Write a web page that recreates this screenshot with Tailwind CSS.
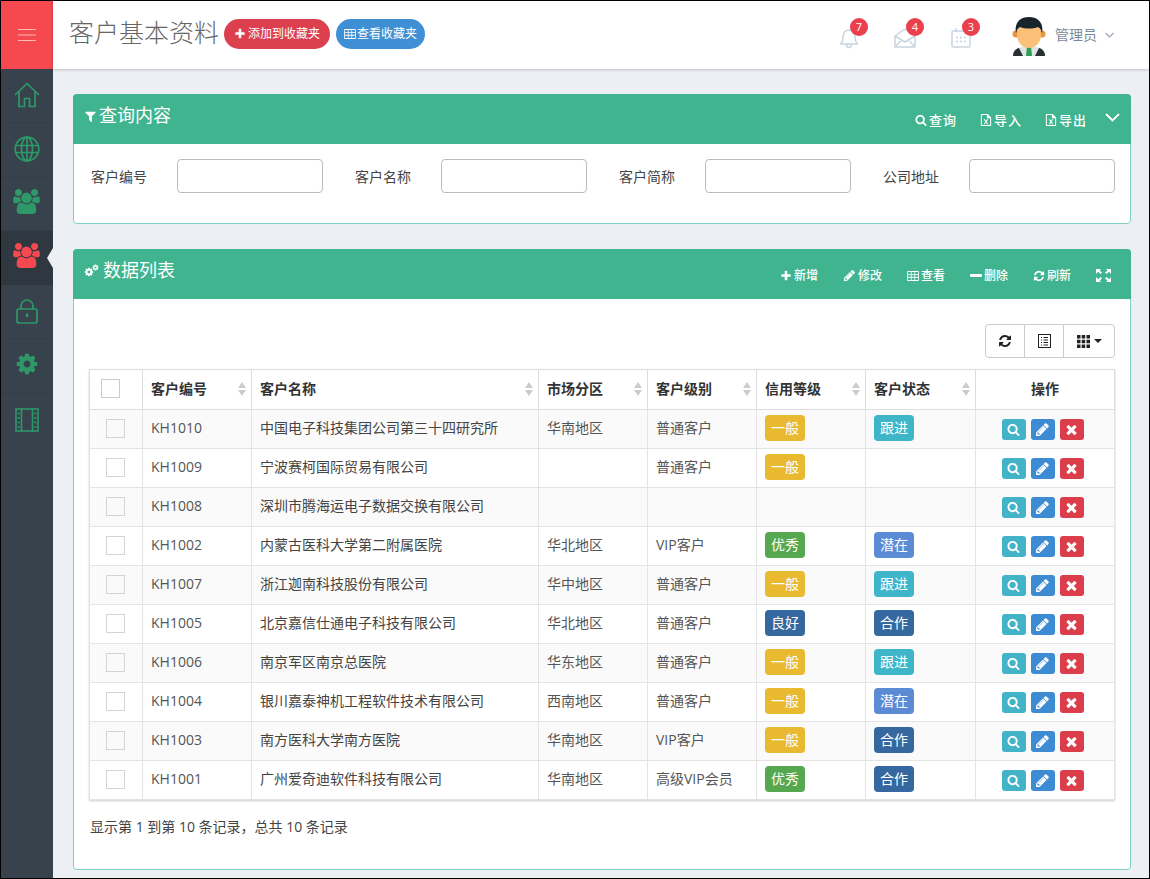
<!DOCTYPE html>
<html lang="en">
<head>
    <meta charset="UTF-8">
    <title>客户基本资料</title>
    <script src="https://cdn.jsdelivr.net/npm/@tailwindcss/browser@4"></script>
</head>
<body class="relative w-[1150px] h-[879px] overflow-hidden bg-[#ecf0f5] font-['Open_Sans','Noto_Sans_CJK_SC',sans-serif] text-sm text-[#555]">
    <!-- Icon sprites -->
    <svg class="hidden">
        <symbol id="i-search" viewBox="0 0 1792 1792"><path d="M1216 832q0-185-131.5-316.5t-316.5-131.5-316.5 131.5-131.5 316.5 131.5 316.5 316.5 131.5 316.5-131.5 131.5-316.5zm512 832q0 52-38 90t-90 38q-54 0-90-38l-343-342q-179 124-399 124-143 0-273.5-55.5t-225-150-150-225-55.5-273.5 55.5-273.5 150-225 225-150 273.5-55.5 273.5 55.5 225 150 150 225 55.5 273.5q0 220-124 399l343 343q37 37 37 90z"/></symbol>
        <symbol id="i-times" viewBox="0 0 1792 1792"><path d="M1490 1322q0 40-28 68l-136 136q-28 28-68 28t-68-28l-294-294-294 294q-28 28-68 28t-68-28l-136-136q-28-28-28-68t28-68l294-294-294-294q-28-28-28-68t28-68l136-136q28-28 68-28t68 28l294 294 294-294q28-28 68-28t68 28l136 136q28 28 28 68t-28 68l-294 294 294 294q28 28 28 68z"/></symbol>
        <symbol id="i-plus" viewBox="0 0 1792 1792"><path d="M1600 736v192q0 40-28 68t-68 28h-416v416q0 40-28 68t-68 28h-192q-40 0-68-28t-28-68v-416h-416q-40 0-68-28t-28-68v-192q0-40 28-68t68-28h416v-416q0-40 28-68t68-28h192q40 0 68 28t28 68v416h416q40 0 68 28t28 68z"/></symbol>
        <symbol id="i-pencil" viewBox="0 0 1792 1792"><path d="M491 1536l91-91-235-235-91 91v107h128v128h107zm523-928q0-22-22-22-10 0-17 7l-542 542q-7 7-7 17 0 22 22 22 10 0 17-7l542-542q7-7 7-17zm-54-192l416 416-832 832h-416v-416zm683 96q0 53-37 90l-166 166-416-416 166-165q36-38 90-38 53 0 91 38l235 234q37 39 37 91z"/></symbol>
        <symbol id="i-filter" viewBox="0 0 1792 1792"><path d="M1595 295q17 41-14 70l-493 493v742q0 42-39 59-13 5-25 5-27 0-45-19l-256-256q-19-19-19-45v-486l-493-493q-31-29-14-70 17-39 59-39h1280q42 0 59 39z"/></symbol>
        <symbol id="i-refresh" viewBox="0 0 1792 1792"><path d="M1639 1056q0 5-1 7-64 268-268 434.5t-478 166.5q-146 0-282.5-55t-243.5-157l-129 129q-19 19-45 19t-45-19-19-45v-448q0-26 19-45t45-19h448q26 0 45 19t19 45-19 45l-137 137q71 66 161 102t187 36q134 0 250-65t186-179q11-17 53-117 8-23 30-23h192q13 0 22.5 9.5t9.5 22.5zm25-800v448q0 26-19 45t-45 19h-448q-26 0-45-19t-19-45 19-45l138-138q-148-137-349-137-134 0-250 65t-186 179q-11 17-53 117-8 23-30 23h-199q-13 0-22.5-9.5t-9.5-22.5v-7q65-268 270-434.5t480-166.5q146 0 284 55.5t245 156.5l130-129q19-19 45-19t45 19 19 45z"/></symbol>
        <symbol id="i-users" viewBox="0 0 1920 1792"><path d="M593 896q-162 5-265 128h-134q-82 0-138-40.5t-56-118.5q0-353 124-353 6 0 43.5 21t97.5 42.5 119 21.5q67 0 133-23-5 37-5 66 0 139 81 256zm1071 637q0 120-73 189.5t-194 69.5h-874q-121 0-194-69.5t-73-189.5q0-53 3.5-103.5t14-109 26.5-108.5 43-97.5 62-81 85.5-53.5 111.5-20q10 0 43 21.5t73 48 107 48 135 21.5 135-21.5 107-48 73-48 43-21.5q61 0 111.5 20t85.5 53.5 62 81 43 97.5 26.5 108.5 14 109 3.5 103.5zm-1024-1277q0 106-75 181t-181 75-181-75-75-181 75-181 181-75 181 75 75 181zm704 384q0 159-112.5 271.5t-271.5 112.5-271.5-112.5-112.5-271.5 112.5-271.5 271.5-112.5 271.5 112.5 112.5 271.5zm576 225q0 78-56 118.5t-138 40.5h-134q-103-123-265-128 81-117 81-256 0-29-5-66 66 23 133 23 59 0 119-21.5t97.5-42.5 43.5-21q124 0 124 353zm-128-609q0 106-75 181t-181 75-181-75-75-181 75-181 181-75 181 75 75 181z"/></symbol>
        <symbol id="i-cog" viewBox="0 0 1792 1792"><path d="M1152 896q0-106-75-181t-181-75-181 75-75 181 75 181 181 75 181-75 75-181zm512-109v222q0 12-8 23t-20 13l-185 28q-19 54-39 91 35 50 107 138 10 12 10 25t-9 23q-27 37-99 108t-94 71q-12 0-26-9l-138-108q-44 23-91 38-16 136-29 186-7 28-36 28h-222q-14 0-24.5-8.5t-11.5-21.5l-28-184q-49-16-90-37l-141 107q-10 9-25 9-14 0-25-11-126-114-165-168-7-10-7-23 0-12 8-23 15-21 51-66.5t54-70.5q-27-50-41-99l-183-27q-13-2-21-12.5t-8-23.5v-222q0-12 8-23t19-13l186-28q14-46 39-92-40-57-107-138-10-12-10-24 0-10 9-23 26-36 98.5-107.5t94.5-71.5q13 0 26 10l138 107q44-23 91-38 16-136 29-186 7-28 36-28h222q14 0 24.5 8.5t11.5 21.5l28 184q49 16 90 37l142-107q9-9 24-9 13 0 25 10 129 119 165 170 7 8 7 22 0 12-8 23-15 21-51 66.5t-54 70.5q26 50 41 98l183 28q13 2 21 12.5t8 23.5z"/></symbol>
        <symbol id="i-table" viewBox="0 0 14 12"><path fill-rule="evenodd" d="M1 0h12a1 1 0 0 1 1 1v10a1 1 0 0 1-1 1H1a1 1 0 0 1-1-1V1a1 1 0 0 1 1-1zm0 1.2v2.4h3.4V1.2zm4.3 0v2.4h3.4V1.2zm4.3 0v2.4H13V1.2zM1 4.6V7h3.4V4.6zm4.3 0V7h3.4V4.6zm4.3 0V7H13V4.6zM1 8v2.8h3.4V8zm4.3 0v2.8h3.4V8zm4.3 0v2.8H13V8z"/></symbol>
        <symbol id="i-excel" viewBox="0 0 12 14"><path fill-rule="evenodd" d="M1 0h7l4 4v9a1 1 0 0 1-1 1H1a1 1 0 0 1-1-1V1a1 1 0 0 1 1-1zm.2 1.2v11.6h9.6V5H7V1.2zM3.3 6h1.4L6 8l1.3-2h1.4L6.8 9l1.9 3H7.3L6 10l-1.3 2H3.3l1.9-3z"/></symbol>
    </svg>

    <!-- Sidebar -->
    <aside class="absolute left-0 top-0 bottom-0 w-[53px] bg-[#37424c]">
        <div class="h-[69px] bg-[#f5484f] flex items-center justify-center">
            <svg class="w-[18px] h-[14px]" viewBox="0 0 18 14" fill="none" stroke="#fbb" stroke-width="1"><path d="M0 1.5h18M0 7h18M0 12.5h18"/></svg>
        </div>
        <div class="h-[54px] flex items-center justify-center border-b border-[#333e47] text-[#2e9868]">
            <svg class="w-[26px] h-[26px] -mt-[1px]" viewBox="0 0 26 26" fill="none" stroke="currentColor" stroke-width="1.7" stroke-linejoin="round"><path d="M1 13 13 1.5 25 13M5 10v14.5h5.5v-8h5v8H21V10"/></svg>
        </div>
        <div class="h-[54px] flex items-center justify-center border-b border-[#333e47] text-[#2e9868]">
            <svg class="w-[26px] h-[26px] -mt-[2px]" viewBox="0 0 26 26" fill="none" stroke="currentColor" stroke-width="1.7"><circle cx="13" cy="13" r="11.8"/><ellipse cx="13" cy="13" rx="5.5" ry="11.8"/><path d="M13 1v24M1.5 9.500h23M1.500 16.500h23"/></svg>
        </div>
        <div class="h-[54px] flex items-center justify-center border-b border-[#333e47] text-[#2e9868]">
            <svg class="w-[27px] h-[25px] -mt-[4px] -ml-px fill-current"><use href="#i-users"/></svg>
        </div>
        <div class="relative h-[54px] flex items-center justify-center bg-[#2f3841] text-[#f5484f]">
            <svg class="w-[27px] h-[25px] -mt-[6px] -ml-px fill-current"><use href="#i-users"/></svg>
            <span class="absolute right-0 top-[17px] border-y-[10px] border-r-[6px] border-y-transparent border-r-[#ecf0f5]"></span>
        </div>
        <div class="h-[54px] flex items-center justify-center border-b border-[#333e47] text-[#2e9868]">
            <svg class="w-[22px] h-[25px] -mt-[1px]" viewBox="0 0 22 25" fill="none" stroke="currentColor" stroke-width="1.7"><rect x="1" y="10" width="20" height="14" rx="2"/><path d="M5 10V7a6 6 0 0 1 12 0v3"/><path d="M11 14.500v3.500" stroke-width="2.6"/></svg>
        </div>
        <div class="h-[54px] flex items-center justify-center border-b border-[#333e47] text-[#2e9868]">
            <svg class="w-6 h-6 -mt-[4px] fill-current"><use href="#i-cog"/></svg>
        </div>
        <div class="h-[54px] flex items-center justify-center text-[#2e9868]">
            <svg class="w-6 h-[24px]" viewBox="0 0 24 24" fill="none" stroke="currentColor" stroke-width="1.6"><rect x="1" y="1" width="22" height="22"/><path d="M6.500 1v22M17.500 1v22"/><path d="M2.500 5.500h2.500M2.500 10h2.500M2.500 14.500h2.500M2.500 19h2.500M19 5.500h2.500M19 10h2.500M19 14.500h2.500M19 19h2.500" stroke-width="1.5"/></svg>
        </div>
    </aside>

    <!-- Top bar -->
    <header class="absolute left-[53px] right-0 top-0 h-[69px] bg-white shadow-[0_1px_3px_rgba(0,0,0,0.2)] flex items-center pl-4">
        <h1 class="text-[25px] font-light text-[#666] leading-none -mt-[4px]">客户基本资料</h1>
        <button class="ml-[5px] -mt-[1px] h-[30px] w-[106px] rounded-full bg-[#dc3f4e] text-white text-xs flex items-center justify-center gap-[2px]">
            <svg class="w-[12px] h-[12px] fill-current"><use href="#i-plus"/></svg>添加到收藏夹
        </button>
        <button class="ml-[6px] -mt-[1px] h-[30px] w-[89px] rounded-full bg-[#3f8fd5] text-white text-xs flex items-center justify-center gap-[1px]">
            <svg class="w-[12px] h-[10px] fill-current"><use href="#i-table"/></svg>查看收藏夹
        </button>

        <div class="ml-auto flex items-center">
            <div class="relative w-[56px] h-[30px] flex items-center justify-center">
                <svg class="w-[20px] h-[22px] mt-[6px]" viewBox="0 0 20 22" fill="none" stroke="#c9d4e0" stroke-width="1.5" stroke-linejoin="round"><path d="M1.5 17c2-2 2.5-3 2.5-7 0-4 2.5-7 6-7s6 3 6 7c0 4 .5 5 2.500 7zM7.500 17.500c0 4 5 4 5 0"/></svg>
                <span class="absolute left-[29px] -top-[2px] w-[18px] h-[18px] rounded-full bg-[#ec3f4d] text-white text-[11px] leading-[18px] text-center">7</span>
            </div>
            <div class="relative w-[56px] h-[30px] flex items-center justify-center">
                <svg class="w-[22px] h-[20px] mt-[6px]" viewBox="0 0 22 20" fill="none" stroke="#c9d4e0" stroke-width="1.5" stroke-linejoin="round"><path d="M1 8 11 1l10 7v11H1zM1 8l10 6 10-6M1 19l7-7.500M21 19l-7-7.500"/></svg>
                <span class="absolute left-[29px] -top-[2px] w-[18px] h-[18px] rounded-full bg-[#ec3f4d] text-white text-[11px] leading-[18px] text-center">4</span>
            </div>
            <div class="relative w-[56px] h-[30px] flex items-center justify-center">
                <svg class="w-[20px] h-[20px] mt-[6px]" viewBox="0 0 20 20" fill="none" stroke="#c9d4e0" stroke-width="1.5"><rect x="1" y="3" width="18" height="16" rx="1"/><path d="M5 0v4M15 0v4M5 9.500h2M9 9.500h2M13 9.500h2M5 13.500h2M9 13.500h2M13 13.500h2"/></svg>
                <span class="absolute left-[29px] -top-[2px] w-[18px] h-[18px] rounded-full bg-[#ec3f4d] text-white text-[11px] leading-[18px] text-center">3</span>
            </div>
            <svg class="ml-[21px] w-[38px] h-[39px] mt-[3px]" viewBox="0 0 38 39">
                <path d="M3 39c0-6 5-10 16-10s16 4 16 10z" fill="#dfe5e6"/>
                <path d="M3 39c0-4 2-7 6-8l4 8zM35 39c0-4-2-7-6-8l-4 8z" fill="#2a3032"/>
                <path d="M17 29h4l1 10h-6z" fill="#2f9e55"/>
                <circle cx="6" cy="17" r="3.500" fill="#e8953f"/><circle cx="32" cy="17" r="3.500" fill="#e8953f"/>
                <ellipse cx="19" cy="18" rx="12" ry="13" fill="#fbc078"/>
                <path d="M6 16C4 6 10 0 19 0s15 6 13 16c-1-3-2-5-4-6-5 2-13 2-18 0-2 1-3 3-4 6z" fill="#17242c"/>
            </svg>
            <span class="ml-[7px] text-sm text-[#7b8a99]">管理员</span>
            <svg class="ml-2 mr-9 w-[9px] h-[6px]" viewBox="0 0 9 6" fill="none" stroke="#9aa6b2" stroke-width="1.2"><path d="M.5 1 4.500 5l4-4"/></svg>
        </div>
    </header>

    <main class="absolute left-[73px] top-[94px] w-[1058px]">
        <!-- Query panel -->
        <section class="h-[130px] bg-white border border-[#7fd0c4] rounded">
            <div class="-mx-px -mt-px h-[50px] bg-[#40b48f] rounded-t text-white flex items-center pl-[11px] pr-[11px]">
                <svg class="w-[13px] h-[13px] -mt-[6px] fill-current"><use href="#i-filter"/></svg>
                <h2 class="ml-[2px] text-lg -mt-[8px]">查询内容</h2>
                <div class="ml-auto flex items-center text-[13px] font-medium mt-[2px]">
                    <span class="flex items-center gap-[2px] tracking-[1px] mr-[23px]"><svg class="w-3 h-3 fill-current"><use href="#i-search"/></svg>查询</span>
                    <span class="flex items-center gap-[2px] tracking-[1px] mr-[23px]"><svg class="w-3 h-3 fill-current"><use href="#i-excel"/></svg>导入</span>
                    <span class="flex items-center gap-[2px] tracking-[1px] mr-[18px]"><svg class="w-3 h-3 fill-current"><use href="#i-excel"/></svg>导出</span>
                    <svg class="w-[15px] h-[9px] -mt-[6px]" viewBox="0 0 15 9" fill="none" stroke="currentColor" stroke-width="1.8"><path d="m1 1 6.500 6.500L14 1"/></svg>
                </div>
            </div>
            <form class="flex pl-[17px] pt-[15px] gap-[32px] text-[#444]">
                <label class="flex items-center">
                    <span class="w-[86px] pt-[2px]">客户编号</span>
                    <input class="w-[146px] h-[34px] border border-[#bbb] rounded bg-white">
                </label>
                <label class="flex items-center">
                    <span class="w-[86px] pt-[2px]">客户名称</span>
                    <input class="w-[146px] h-[34px] border border-[#bbb] rounded bg-white">
                </label>
                <label class="flex items-center">
                    <span class="w-[86px] pt-[2px]">客户简称</span>
                    <input class="w-[146px] h-[34px] border border-[#bbb] rounded bg-white">
                </label>
                <label class="flex items-center">
                    <span class="w-[86px] pt-[2px]">公司地址</span>
                    <input class="w-[146px] h-[34px] border border-[#bbb] rounded bg-white">
                </label>
            </form>
        </section>

        <!-- Data list panel -->
        <section class="mt-[25px] h-[621px] bg-white border border-[#7fd0c4] rounded">
            <div class="-mx-px -mt-px h-[50px] bg-[#40b48f] rounded-t text-white flex items-center pl-[11px] pr-[20px]">
                <span class="relative w-[15px] h-[12px] -mt-[6px]">
                    <svg class="absolute left-0 top-[2px] w-[10px] h-[10px] fill-current"><use href="#i-cog"/></svg>
                    <svg class="absolute right-0 -top-[1px] w-[7px] h-[7px] fill-current"><use href="#i-cog"/></svg>
                </span>
                <h2 class="ml-[4px] text-lg -mt-[8px]">数据列表</h2>
                <div class="ml-auto flex items-center gap-[25px] text-xs font-medium mt-[3px]">
                    <span class="flex items-center gap-[2px]"><svg class="w-3 h-3 fill-current"><use href="#i-plus"/></svg>新增</span>
                    <span class="flex items-center gap-[2px]"><svg class="w-[13px] h-[13px] fill-current"><use href="#i-pencil"/></svg>修改</span>
                    <span class="flex items-center gap-[2px]"><svg class="w-3 h-[10px] fill-current"><use href="#i-table"/></svg>查看</span>
                    <span class="flex items-center gap-[2px]"><span class="w-3 h-[3px] bg-white rounded-[1px]"></span>删除</span>
                    <span class="flex items-center gap-[2px]"><svg class="w-3 h-3 fill-current"><use href="#i-refresh"/></svg>刷新</span>
                    <svg class="w-[15px] h-[13px]" viewBox="0 0 15 13" fill="currentColor"><path d="M0 0h5L3.600 1.400 6 3.600 4.600 5 2.200 2.800 0 5zM15 0v5l-2-2.200L10.400 5 9 3.600l2.600-2.200L10 0zM0 13V8l2.200 2.200L4.600 8 6 9.400l-2.400 2.200L5 13zM15 13h-5l1.600-1.400L9 9.400 10.400 8l2.600 2.200L15 8z"/></svg>
                </div>
            </div>

            <div class="px-[15px]">
                <!-- Table toolbar -->
                <div class="flex justify-end pt-[25px] pb-[11px]">
                    <div class="flex h-[34px] border border-[#ccc] rounded text-[#222] bg-white">
                        <button class="w-[39px] flex items-center justify-center border-r border-[#ccc]"><svg class="w-[14px] h-[14px] fill-current"><use href="#i-refresh"/></svg></button>
                        <button class="w-[39px] flex items-center justify-center border-r border-[#ccc]">
                            <svg class="w-[13px] h-[14px]" viewBox="0 0 13 14" fill="none" stroke="currentColor"><rect x=".5" y=".5" width="12" height="13"/><path d="M3 3.500h1M5.500 3.500H10M3 6h1M5.500 6H10M3 8.500h1M5.500 8.500H10M3 11h1M5.500 11H10"/></svg>
                        </button>
                        <button class="w-[50px] flex items-center justify-center gap-[4px]">
                            <svg class="w-[13px] h-[13px]" viewBox="0 0 13 13" fill="currentColor"><path d="M0 0h3.500v3.500H0zM4.700 0h3.500v3.500H4.700zM9.500 0H13v3.500H9.500zM0 4.700h3.500v3.500H0zM4.700 4.700h3.500v3.500H4.700zM9.500 4.700H13v3.500H9.500zM0 9.500h3.500V13H0zM4.700 9.500h3.500V13H4.700zM9.500 9.500H13V13H9.500z"/></svg>
                            <span class="border-x-[4px] border-t-[4px] border-x-transparent border-t-[#222]"></span>
                        </button>
                    </div>
                </div>

                <table class="w-[1025px] table-fixed border-collapse border border-[#ddd] shadow-[0_1px_2px_rgba(0,0,0,0.2)]">
                    <colgroup>
                        <col class="w-[53px]"><col class="w-[109px]"><col class="w-[287px]"><col class="w-[109px]"><col class="w-[109px]"><col class="w-[109px]"><col class="w-[110px]"><col class="w-[139px]">
                    </colgroup>
                    <thead>
                        <tr class="h-[40px] text-[#333] font-bold">
                            <th class="border border-[#ddd] pb-[2px]"><span class="block ml-[11px] w-[19px] h-[19px] border border-[#ccc]"></span></th>
                            <th class="border border-[#ddd] text-left pl-2 pb-[2px]"><span class="flex items-center justify-between pr-[5px]">客户编号<span></span></span></th>
                            <th class="border border-[#ddd] text-left pl-2 pb-[2px]"><span class="flex items-center justify-between pr-[5px]">客户名称<span></span></span></th>
                            <th class="border border-[#ddd] text-left pl-2 pb-[2px]"><span class="flex items-center justify-between pr-[5px]">市场分区<span></span></span></th>
                            <th class="border border-[#ddd] text-left pl-2 pb-[2px]"><span class="flex items-center justify-between pr-[5px]">客户级别<span></span></span></th>
                            <th class="border border-[#ddd] text-left pl-2 pb-[2px]"><span class="flex items-center justify-between pr-[5px]">信用等级<span></span></span></th>
                            <th class="border border-[#ddd] text-left pl-2 pb-[2px]"><span class="flex items-center justify-between pr-[5px]">客户状态<span></span></span></th>
                            <th class="border border-[#ddd] pb-[2px]">操作</th>
                        </tr>
                    </thead>
                    <tbody id="rows"></tbody>
                </table>

                <p class="mt-[17px] pl-px text-[#444]">显示第 1 到第 10 条记录，总共 10 条记录</p>
            </div>
        </section>
    </main>

    <!-- Screenshot frame -->
    <div class="pointer-events-none absolute inset-0 border border-black"></div>

    <script>
        const credit = {
            '一般': 'bg-[#e9b92f]',
            '优秀': 'bg-[#55a84f]',
            '良好': 'bg-[#35689f]'
        };
        const state = {
            '跟进': 'bg-[#3fb5c9]',
            '潜在': 'bg-[#5b8bd5]',
            '合作': 'bg-[#35689f]'
        };
        const customers = [
            ['KH1010', '中国电子科技集团公司第三十四研究所', '华南地区', '普通客户', '一般', '跟进'],
            ['KH1009', '宁波赛柯国际贸易有限公司', '', '普通客户', '一般', ''],
            ['KH1008', '深圳市腾海运电子数据交换有限公司', '', '', '', ''],
            ['KH1002', '内蒙古医科大学第二附属医院', '华北地区', 'VIP客户', '优秀', '潜在'],
            ['KH1007', '浙江迦南科技股份有限公司', '华中地区', '普通客户', '一般', '跟进'],
            ['KH1005', '北京嘉信仕通电子科技有限公司', '华北地区', '普通客户', '良好', '合作'],
            ['KH1006', '南京军区南京总医院', '华东地区', '普通客户', '一般', '跟进'],
            ['KH1004', '银川嘉泰神机工程软件技术有限公司', '西南地区', '普通客户', '一般', '潜在'],
            ['KH1003', '南方医科大学南方医院', '华南地区', 'VIP客户', '一般', '合作'],
            ['KH1001', '广州爱奇迪软件科技有限公司', '华南地区', '高级VIP会员', '优秀', '合作']
        ];

        function badge(text, colors) {
            if (!text) return '';
            return `<span class="inline-block w-10 h-[26px] leading-[25px] rounded text-center text-white ${colors[text]}">${text}</span>`;
        }

        function actionButton(icon, color, size) {
            return `<button class="w-6 h-[21px] rounded-[3px] text-white flex items-center justify-center ${color}"><svg class="${size} fill-current"><use href="#${icon}"/></svg></button>`;
        }

        document.getElementById('rows').innerHTML = customers.map((c, i) => `
            <tr class="h-[39px] ${i % 2 === 0 ? 'bg-[#fafafa]' : 'bg-white'}">
                <td class="border border-[#e4e4e4] pb-[2px]"><span class="block ml-4 w-[19px] h-[19px] border border-[#d4d4d4]"></span></td>
                <td class="border border-[#e4e4e4] pl-2 pb-[2px] text-[#555]">${c[0]}</td>
                <td class="border border-[#e4e4e4] pl-2 pb-[2px] text-[#444]">${c[1]}</td>
                <td class="border border-[#e4e4e4] pl-2 pb-[2px]">${c[2]}</td>
                <td class="border border-[#e4e4e4] pl-2 pb-[2px]">${c[3]}</td>
                <td class="border border-[#e4e4e4] pl-2 pb-[2px]">${badge(c[4], credit)}</td>
                <td class="border border-[#e4e4e4] pl-2 pb-[2px]">${badge(c[5], state)}</td>
                <td class="border border-[#e4e4e4] pr-[5px]">
                    <div class="flex justify-center gap-[5px]">
                        ${actionButton('i-search', 'bg-[#43b4c8]', 'w-[13px] h-[13px]')}
                        ${actionButton('i-pencil', 'bg-[#3d8bd3]', 'w-[15px] h-[15px]')}
                        ${actionButton('i-times', 'bg-[#dc3d4b]', 'w-[15px] h-[15px]')}
                    </div>
                </td>
            </tr>`).join('');

        // sort arrows in the header cells
        document.querySelectorAll('thead th > span > span').forEach((s) => {
            s.innerHTML = '<svg class="w-2 h-[14px]" viewBox="0 0 8 14" fill="#ccc"><path d="M4 0l4 6H0zM4 14l4-6H0z"/></svg>';
        });
    </script>
</body>
</html>
